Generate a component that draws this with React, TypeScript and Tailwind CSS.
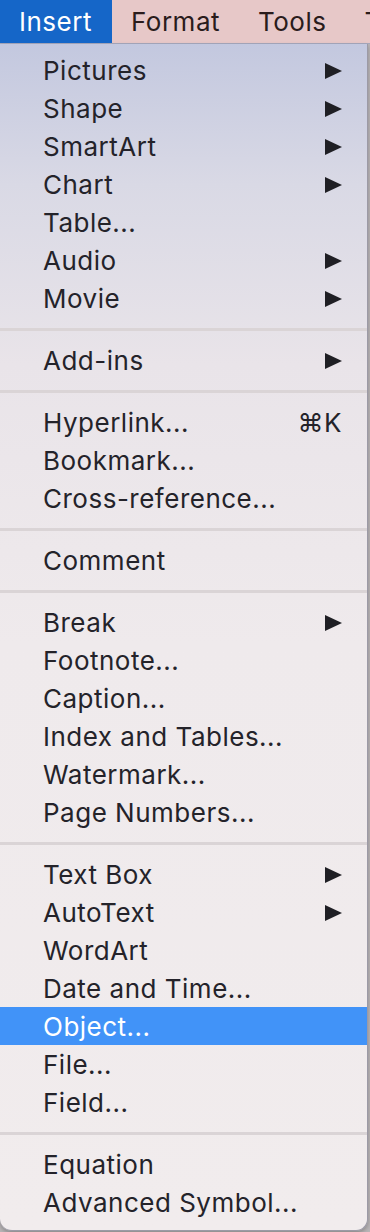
import React from 'react';

type Item = { label: string; sub?: boolean; key?: string; active?: boolean } | 'sep';

const items: Item[] = [
  { label: 'Pictures', sub: true },
  { label: 'Shape', sub: true },
  { label: 'SmartArt', sub: true },
  { label: 'Chart', sub: true },
  { label: 'Table...' },
  { label: 'Audio', sub: true },
  { label: 'Movie', sub: true },
  'sep',
  { label: 'Add-ins', sub: true },
  'sep',
  { label: 'Hyperlink...', key: '⌘K' },
  { label: 'Bookmark...' },
  { label: 'Cross-reference...' },
  'sep',
  { label: 'Comment' },
  'sep',
  { label: 'Break', sub: true },
  { label: 'Footnote...' },
  { label: 'Caption...' },
  { label: 'Index and Tables...' },
  { label: 'Watermark...' },
  { label: 'Page Numbers...' },
  'sep',
  { label: 'Text Box', sub: true },
  { label: 'AutoText', sub: true },
  { label: 'WordArt' },
  { label: 'Date and Time...' },
  { label: 'Object...', active: true },
  { label: 'File...' },
  { label: 'Field...' },
  'sep',
  { label: 'Equation' },
  { label: 'Advanced Symbol...' },
];

function Arrow({ white }: { white?: boolean }) {
  return (
    <svg width="17" height="16" viewBox="0 0 17 16" className="mt-[2px]">
      <path d="M0 0 L17 8 L0 16 Z" fill={white ? '#fff' : '#1f1f24'} />
    </svg>
  );
}

export default function App() {
  return (
    <div className="w-[370px] h-[1232px] bg-[#b9b5b7] overflow-hidden font-['Inter','Liberation_Sans',sans-serif] text-[26px] tracking-[0.5px]">
      <div className="h-[44px] flex items-stretch bg-[#e7c8c8] border-b border-[#a7a9bd] text-[#2a1c1c] whitespace-nowrap">
        <div className="bg-[#1566c8] text-white pl-[19px] flex items-center w-[112px] shrink-0">Insert</div>
        <div className="px-[19px] flex items-center shrink-0">Format</div>
        <div className="px-[19px] flex items-center shrink-0">Tools</div>
        <div className="px-[19px] flex items-center shrink-0">T</div>
      </div>
      <div className="w-[368px] pt-[7px] pb-[9px] rounded-b-[12px] border-r border-b border-[#9c9aa6] shadow-[0_2px_4px_rgba(0,0,0,0.25)] bg-[linear-gradient(180deg,#c3c8df_0px,#d9d9e5_140px,#e9e4e9_320px,#efeaec_600px,#f1eced_100%)] text-[#24232a]">
        {items.map((it, i) =>
          it === 'sep' ? (
            <div key={i} className="h-[24px] flex items-center">
              <div className="h-[3px] w-full bg-[#dad4d6]" />
            </div>
          ) : (
            <div
              key={i}
              className={`h-[38px] flex items-center justify-between pl-[43px] pr-[25px] ${it.active ? 'bg-[#4193f8] text-white' : ''}`}
            >
              <span>{it.label}</span>
              {it.sub && <Arrow white={it.active} />}
              {it.key && <span>{it.key}</span>}
            </div>
          )
        )}
      </div>
    </div>
  );
}
